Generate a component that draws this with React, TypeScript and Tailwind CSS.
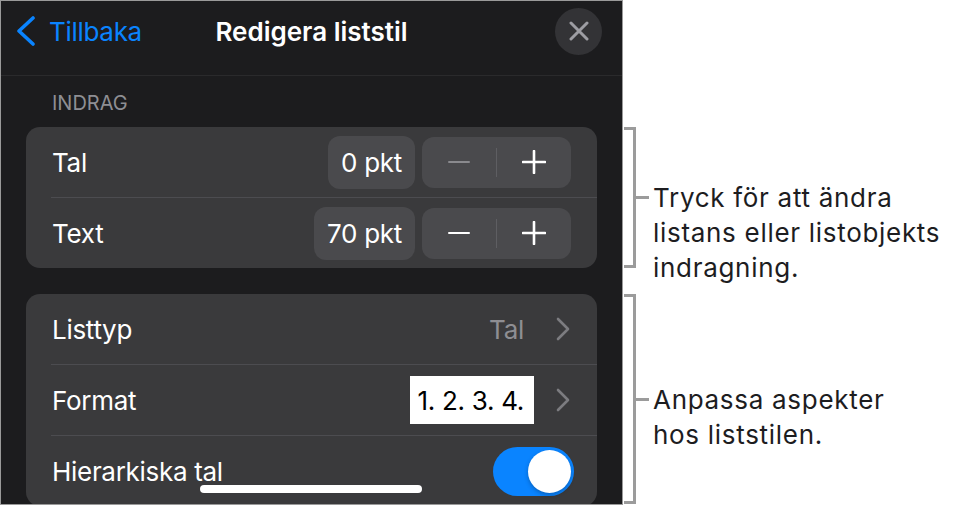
const font = { fontFamily: "Inter, 'Noto Sans', sans-serif" };

const Chevron = ({ className = "" }: { className?: string }) => (
  <svg width="14" height="24" viewBox="0 0 14 24" className={className}>
    <path d="M2 2 L12 12 L2 22" fill="none" stroke="#7c7c80" strokeWidth="2.6" strokeLinecap="round" strokeLinejoin="round" />
  </svg>
);

const Stepper = ({ minusOff }: { minusOff?: boolean }) => (
  <div className="ml-[7px] flex h-[51px] w-[149px] items-center rounded-[12px] bg-[#4a4a4d]">
    <div className="flex flex-1 items-center justify-center">
      <div className={`h-[2.5px] w-[22px] rounded-full ${minusOff ? "bg-[#8a8a8e]" : "bg-white"}`} />
    </div>
    <div className="h-[29px] w-px bg-[#5e5e62]" />
    <div className="flex flex-1 items-center justify-center">
      <svg width="24" height="24" viewBox="0 0 24 24">
        <path d="M12 1 V23 M1 12 H23" stroke="white" strokeWidth="2.6" strokeLinecap="round" />
      </svg>
    </div>
  </div>
);

const Callout = ({ lines, height, shift }: { lines: string[]; height: string; shift: string }) => (
  <div className={`flex items-center ${height}`}>
    <div className="h-full w-[12px] border-y-[3px] border-r-[3px] border-[#9b9b9b]" />
    <div className="h-[3px] w-[13px] bg-[#9b9b9b]" />
    <div className={`ml-[4px] whitespace-nowrap text-[26px] leading-[35px] tracking-[0.7px] text-[#1d1d1f] ${shift}`} style={font}>
      {lines.map((l) => (
        <div key={l}>{l}</div>
      ))}
    </div>
  </div>
);

export default function App() {
  return (
    <div className="flex h-[505px] w-[958px] overflow-hidden bg-white" style={font}>
      {/* phone screen */}
      <div className="relative h-[505px] w-[623px] shrink-0 overflow-hidden border border-[#9a9a9a] bg-[#1c1c1e] text-[26px] text-white">
        <div className="h-[75px] border-b border-[#2a2a2c]">
          <div className="grid h-[60px] grid-cols-[1fr_auto_1fr] items-center">
            <div className="flex items-center pl-[15px] text-[#0a84ff]">
              <svg width="20" height="30" viewBox="0 0 20 30">
                <path d="M17 2 L3 15 L17 28" fill="none" stroke="#0a84ff" strokeWidth="3.6" strokeLinecap="round" strokeLinejoin="round" />
              </svg>
              <span className="ml-[13px] tracking-[-0.3px]">Tillbaka</span>
            </div>
            <div className="font-semibold">Redigera liststil</div>
            <div className="flex justify-end pr-[20px]">
              <div className="flex h-[47px] w-[47px] items-center justify-center rounded-full bg-[#333336]">
                <svg width="20" height="20" viewBox="0 0 20 20">
                  <path d="M2 2 L18 18 M18 2 L2 18" stroke="#9d9da3" strokeWidth="3" strokeLinecap="round" />
                </svg>
              </div>
            </div>
          </div>
        </div>

        <div className="mt-[15px] pl-[51px] text-[20px] leading-[24px] text-[#8e8e93]">INDRAG</div>

        <div className="mx-[25px] mt-[12px] rounded-[14px] bg-[#3a3a3c]">
          <div className="flex h-[70px] items-center pl-[26px] pr-[26px]">
            <span className="tracking-[-0.3px]">Tal</span>
            <div className="ml-auto flex h-[53px] items-center rounded-[12px] bg-[#4a4a4d] px-[13px] tracking-[-0.3px]">0 pkt</div>
            <Stepper minusOff />
          </div>
          <div className="ml-[25px] h-px bg-[#4c4c50]" />
          <div className="flex h-[70px] items-center pl-[26px] pr-[26px]">
            <span className="tracking-[-0.3px]">Text</span>
            <div className="ml-auto flex h-[53px] items-center rounded-[12px] bg-[#4a4a4d] px-[13px] tracking-[-0.3px]">70 pkt</div>
            <Stepper />
          </div>
        </div>

        <div className="mx-[25px] mt-[26px] rounded-[14px] bg-[#3a3a3c]">
          <div className="flex h-[70px] items-center pl-[26px] pr-[27px]">
            <span className="tracking-[-0.3px]">Listtyp</span>
            <span className="ml-auto text-[#8e8e93] tracking-[-0.3px]">Tal</span>
            <Chevron className="ml-[32px]" />
          </div>
          <div className="ml-[25px] h-px bg-[#4c4c50]" />
          <div className="flex h-[70px] items-center pl-[26px] pr-[27px]">
            <span className="tracking-[-0.3px]">Format</span>
            <div className="ml-auto flex h-[48px] items-center bg-white pl-[8px] pr-[10px] text-black tracking-[-0.3px]">1. 2. 3. 4.</div>
            <Chevron className="ml-[22px]" />
          </div>
          <div className="ml-[25px] h-px bg-[#4c4c50]" />
          <div className="flex h-[70px] items-center pl-[26px] pr-[23px]">
            <span className="tracking-[-0.3px]">Hierarkiska tal</span>
            <div className="ml-auto flex h-[49px] w-[81px] items-center justify-end rounded-full bg-[#0a84ff] pr-[3px]">
              <div className="h-[43px] w-[43px] rounded-full bg-white shadow-[0_2px_4px_rgba(0,0,0,0.25)]" />
            </div>
          </div>
        </div>

        {/* home indicator */}
        <div className="absolute left-[199px] top-[484px] h-[8px] w-[222px] rounded-full bg-white" />
      </div>

      {/* callouts */}
      <div className="flex flex-col pl-px pt-[127px]">
        <Callout height="h-[141px]" shift="mt-[70px]" lines={["Tryck för att ändra", "listans eller listobjekts", "indragning."]} />
        <div className="h-[26px]" />
        <Callout height="h-[210px]" shift="mt-[35px]" lines={["Anpassa aspekter", "hos liststilen."]} />
      </div>
    </div>
  );
}
